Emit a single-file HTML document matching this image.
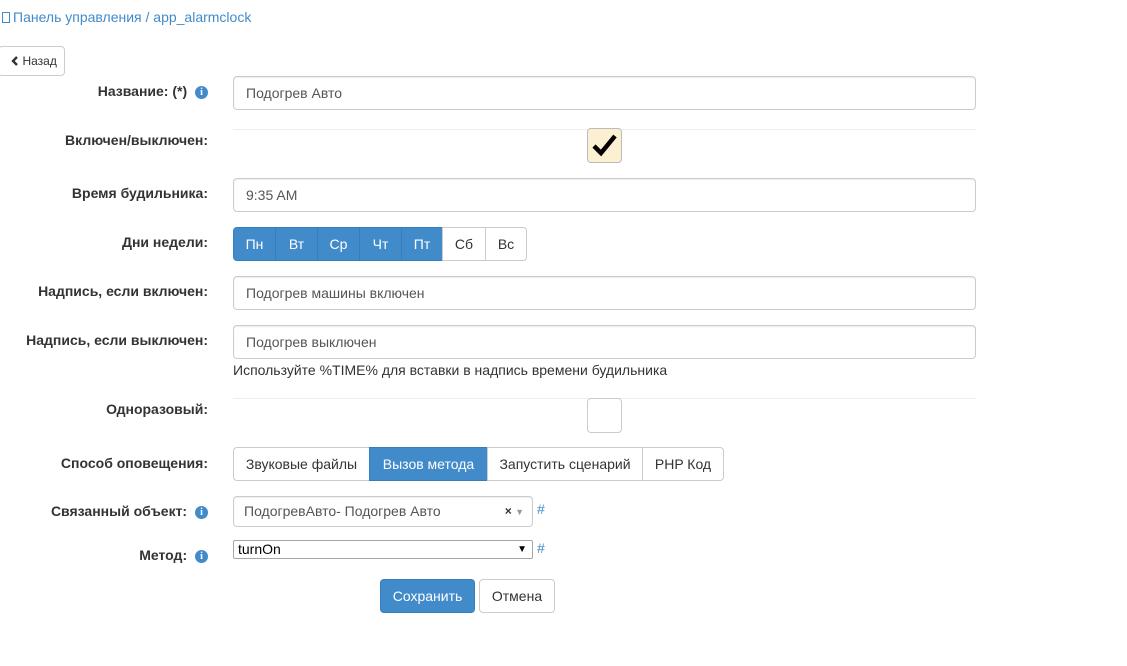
<!DOCTYPE html><html><head><meta charset="utf-8"><style>
*{box-sizing:border-box}body{margin:0;width:1127px;height:666px;background:#fff;font-family:"Liberation Sans",sans-serif;font-size:14px;color:#333;position:relative;overflow:hidden}
.a{position:absolute}
.lbl{position:absolute;right:919px;font-weight:bold;white-space:nowrap;line-height:20px}
.inp{position:absolute;left:233px;width:743px;height:34px;border:1px solid #ccc;border-radius:4px;padding:6px 12px;line-height:20px;color:#555;box-shadow:inset 0 1px 1px rgba(0,0,0,.075)}
.hr{position:absolute;left:233px;width:743px;border-top:1px solid #eee}
.info{display:inline-block;width:13px;height:13px;border-radius:50%;background:#428bca;color:#fff;font-size:10px;font-weight:bold;text-align:center;line-height:13px;vertical-align:1px;margin-left:4px;font-family:"Liberation Serif",serif}
.grp{position:absolute;display:flex}
.grp div{height:34px;border:1px solid #ccc;margin-left:-1px;line-height:32px;text-align:center;background:#fff;color:#333}
.grp .on{background:#428bca;border-color:#357ebd;color:#fff}
.grp div:first-child{border-radius:4px 0 0 4px;margin-left:0}.grp div:last-child{border-radius:0 4px 4px 0}
.cb{position:absolute;left:587px;width:35px;height:35px;border:1px solid #ccc;border-radius:4px}
.btn{position:absolute;height:34px;border:1px solid #ccc;border-radius:4px;line-height:32px;text-align:center}
</style></head><body>
<div class="a" style="left:2px;top:8px;color:#428bca;line-height:18px"><span style="display:inline-block;width:8px;height:11px;border:1px solid #428bca;vertical-align:-1px;margin-right:3px"></span>Панель управления / app_alarmclock</div>
<div class="btn" style="left:-2px;top:46px;width:67px;height:30px;line-height:28px;font-size:12px;padding-left:4px"><svg width="9" height="10" viewBox="0 0 9 10" style="vertical-align:-1px"><path d="M7 1 L3 5 L7 9" stroke="#333" stroke-width="2.4" fill="none"/></svg> Назад</div>

<div class="lbl" style="top:81px;right:919px">Название: (*) <span class="info">i</span></div>
<div class="inp" style="top:76px">Подогрев Авто</div>

<div class="lbl" style="top:130px">Включен/выключен:</div>
<div class="hr" style="top:129px"></div>
<div class="cb" style="top:128px;background:#fcf0d3;border-color:#bbb"><svg width="33" height="33" viewBox="0 0 33 33"><path d="M6 17 L13 24 L27 7" stroke="#000" stroke-width="4.5" fill="none"/></svg></div>

<div class="lbl" style="top:183px">Время будильника:</div>
<div class="inp" style="top:178px">9:35 AM</div>

<div class="lbl" style="top:232px">Дни недели:</div>
<div class="grp" style="left:233px;top:227px"><div class="on" style="width:43px">Пн</div><div class="on" style="width:43px">Вт</div><div class="on" style="width:43px">Ср</div><div class="on" style="width:43px">Чт</div><div class="on" style="width:42px">Пт</div><div style="width:44px">Сб</div><div style="width:42px">Вс</div></div>

<div class="lbl" style="top:281px">Надпись, если включен:</div>
<div class="inp" style="top:276px">Подогрев машины включен</div>

<div class="lbl" style="top:330px">Надпись, если выключен:</div>
<div class="inp" style="top:325px">Подогрев выключен</div>
<div class="a" style="left:233px;top:360px;line-height:20px">Используйте %TIME% для вставки в надпись времени будильника</div>

<div class="lbl" style="top:399px">Одноразовый:</div>
<div class="hr" style="top:398px"></div>
<div class="cb" style="top:398px"></div>

<div class="lbl" style="top:453px">Способ оповещения:</div>
<div class="grp" style="left:233px;top:447px"><div style="width:137px">Звуковые файлы</div><div class="on" style="width:119px">Вызов метода</div><div style="width:156px">Запустить сценарий</div><div style="width:82px">PHP Код</div></div>

<div class="lbl" style="top:501px">Связанный объект: <span class="info">i</span></div>
<div class="inp" style="top:496px;width:300px;height:31px;padding:4px 10px">ПодогревАвто- Подогрев Авто<span class="a" style="right:8px;top:4px;color:#333;font-size:12px;font-weight:bold">× <span style="color:#999;font-size:9px">▼</span></span></div>
<div class="a" style="left:537px;top:501px;color:#428bca">#</div>

<div class="lbl" style="top:545px">Метод: <span class="info">i</span></div>
<div class="a" style="left:233px;top:540px;width:300px;height:19px;border:1px solid #a6a6a6;border-radius:2px;padding:0 4px;line-height:17px;color:#000">turnOn<span class="a" style="right:5px;top:0;font-size:10px">▼</span></div>
<div class="a" style="left:537px;top:540px;color:#428bca">#</div>

<div class="btn" style="left:380px;top:579px;width:95px;background:#428bca;border-color:#357ebd;color:#fff">Сохранить</div>
<div class="btn" style="left:479px;top:579px;width:76px">Отмена</div>
</body></html>
